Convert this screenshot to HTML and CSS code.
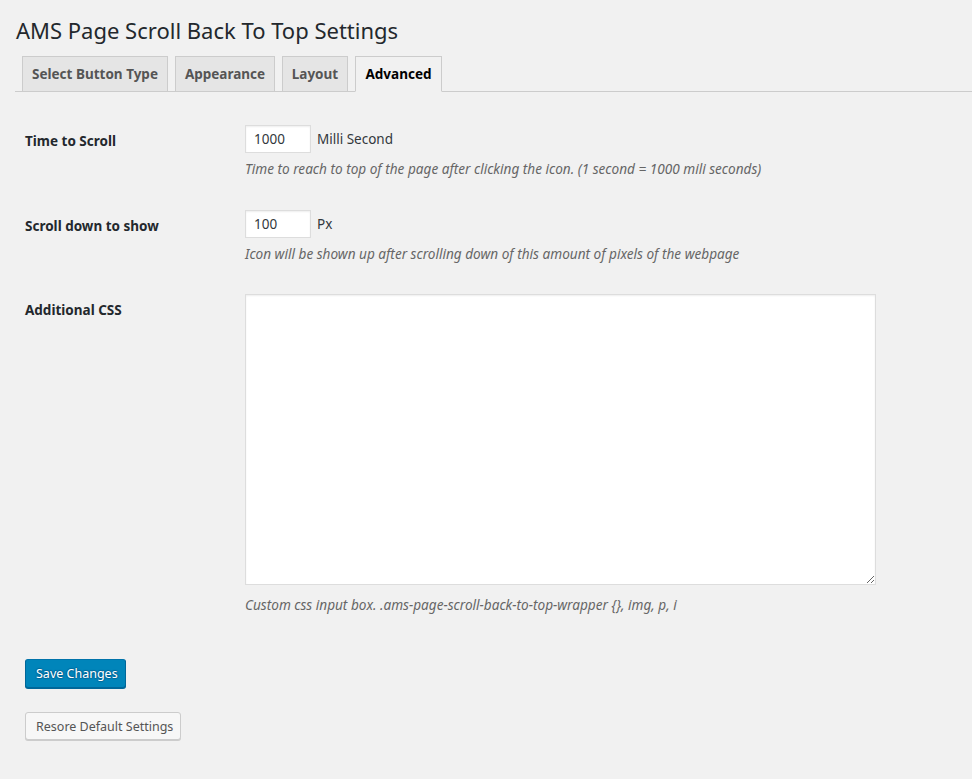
FILE: index.html
```html
<!DOCTYPE html>
<html lang="en">
<head>
<meta charset="utf-8">
<title>AMS Page Scroll Back To Top Settings</title>
<link rel="stylesheet" href="styles.css">
</head>
<body>
<div class="wrap">
  <h1 class="page-title">AMS Page Scroll Back To Top Settings</h1>
  <nav class="nav-tabs">
    <a class="nav-tab tab-1">Select Button Type</a>
    <a class="nav-tab tab-2">Appearance</a>
    <a class="nav-tab tab-3">Layout</a>
    <a class="nav-tab tab-4 active">Advanced</a>
  </nav>
  <form class="settings">
    <div class="row row-1">
      <div class="label">Time to Scroll</div>
      <div class="field">
        <div class="line"><input class="num" type="text" value="1000"><span class="unit">Milli Second</span></div>
        <p class="desc">Time to reach to top of the page after clicking the icon. (1 second = 1000 mili seconds)</p>
      </div>
    </div>
    <div class="row row-2">
      <div class="label">Scroll down to show</div>
      <div class="field">
        <div class="line"><input class="num" type="text" value="100"><span class="unit">Px</span></div>
        <p class="desc">Icon will be shown up after scrolling down of this amount of pixels of the webpage</p>
      </div>
    </div>
    <div class="row row-3">
      <div class="label label-ta">Additional CSS</div>
      <div class="field">
        <textarea class="css-box"></textarea>
        <p class="desc desc-ta">Custom css input box. .ams-page-scroll-back-to-top-wrapper {}, img, p, i</p>
      </div>
    </div>
    <div class="actions">
      <button type="button" class="btn btn-primary">Save Changes</button>
      <button type="button" class="btn btn-secondary">Resore Default Settings</button>
    </div>
  </form>
</div>
</body>
</html>
```

FILE: styles.css
```css
html, body {
  margin: 0;
  padding: 0;
  background: #f1f1f1;
}
body {
  font-family: "Noto Sans", "Open Sans", sans-serif;
  color: #23282d;
  font-size: 13px;
  height: 779px;
  overflow: hidden;
}
.wrap {
  padding: 0 0 0 15px;
}
.page-title {
  margin: 0;
  padding: 15px 0 0 1px;
  font-size: 22px;
  font-weight: 400;
  line-height: 30px;
  color: #23282d;
  height: 41px;
}
.nav-tabs {
  display: flex;
  gap: 7px;
  padding-left: 7px;
  border-bottom: 1px solid #ccc;
  height: 35px;
  align-items: flex-end;
}
.nav-tab {
  box-sizing: border-box;
  height: 36px;
  margin-bottom: -1px;
  border: 1px solid #ccc;
  background: #e5e5e5;
  color: #555;
  font-size: 13.5px;
  font-weight: 700;
  line-height: 34px;
  padding: 0 6px;
  text-align: center;
  white-space: nowrap;
}
.tab-1 { width: 146px; }
.tab-2 { width: 100px; }
.tab-3 { width: 66px; }
.tab-4 { width: 87px; }
.nav-tab.active {
  background: #f1f1f1;
  border-bottom-color: #f1f1f1;
  color: #000;
}
.settings {
  padding-left: 10px;
}
.row {
  display: grid;
  grid-template-columns: 220px 640px;
}
.row-1 { padding-top: 33px; }
.row-2 { padding-top: 31px; }
.row-3 { padding-top: 30px; }
.label {
  font-size: 13.5px;
  font-weight: 700;
  line-height: 20px;
  padding-top: 6px;
  color: #23282d;
}
.line {
  display: flex;
  align-items: center;
  height: 28px;
}
.num {
  box-sizing: border-box;
  width: 66px;
  height: 28px;
  margin: 0 6px 0 0;
  padding: 0 8px;
  border: 1px solid #ddd;
  box-shadow: inset 0 1px 2px rgba(0,0,0,.07);
  background: #fff;
  font-family: inherit;
  font-size: 13.5px;
  color: #32373c;
  outline: none;
}
.unit {
  font-size: 13.5px;
  color: #32373c;
}
.desc {
  margin: 6px 0 0;
  font-size: 13.6px;
  line-height: 20px;
  font-style: italic;
  color: #666;
}
.css-box {
  display: block;
  box-sizing: border-box;
  width: 631px;
  height: 291px;
  margin: 0;
  border: 1px solid #ddd;
  box-shadow: inset 0 1px 2px rgba(0,0,0,.07);
  background: #fff;
  outline: none;
}
.desc-ta {
  margin-top: 10px;
}
.actions {
  display: flex;
  flex-direction: column;
  align-items: flex-start;
  gap: 24px;
  padding-top: 44px;
}
.btn {
  box-sizing: border-box;
  font-family: inherit;
  font-size: 12.5px;
  border-radius: 3px;
  padding: 0 10px;
  margin: 0;
  cursor: pointer;
  white-space: nowrap;
}
.btn-primary {
  height: 29px;
  width: 101px;
  background: #0085ba;
  border: 1px solid #0073aa;
  border-color: #0073aa #006799 #006799;
  box-shadow: 0 1px 0 #006799;
  color: #fff;
  text-shadow: 0 -1px 1px #006799, 1px 0 1px #006799, 0 1px 1px #006799, -1px 0 1px #006799;
}
.btn-secondary {
  height: 28px;
  width: 156px;
  background: #f7f7f7;
  border: 1px solid #ccc;
  box-shadow: 0 1px 0 #ccc;
  color: #555;
}
```
